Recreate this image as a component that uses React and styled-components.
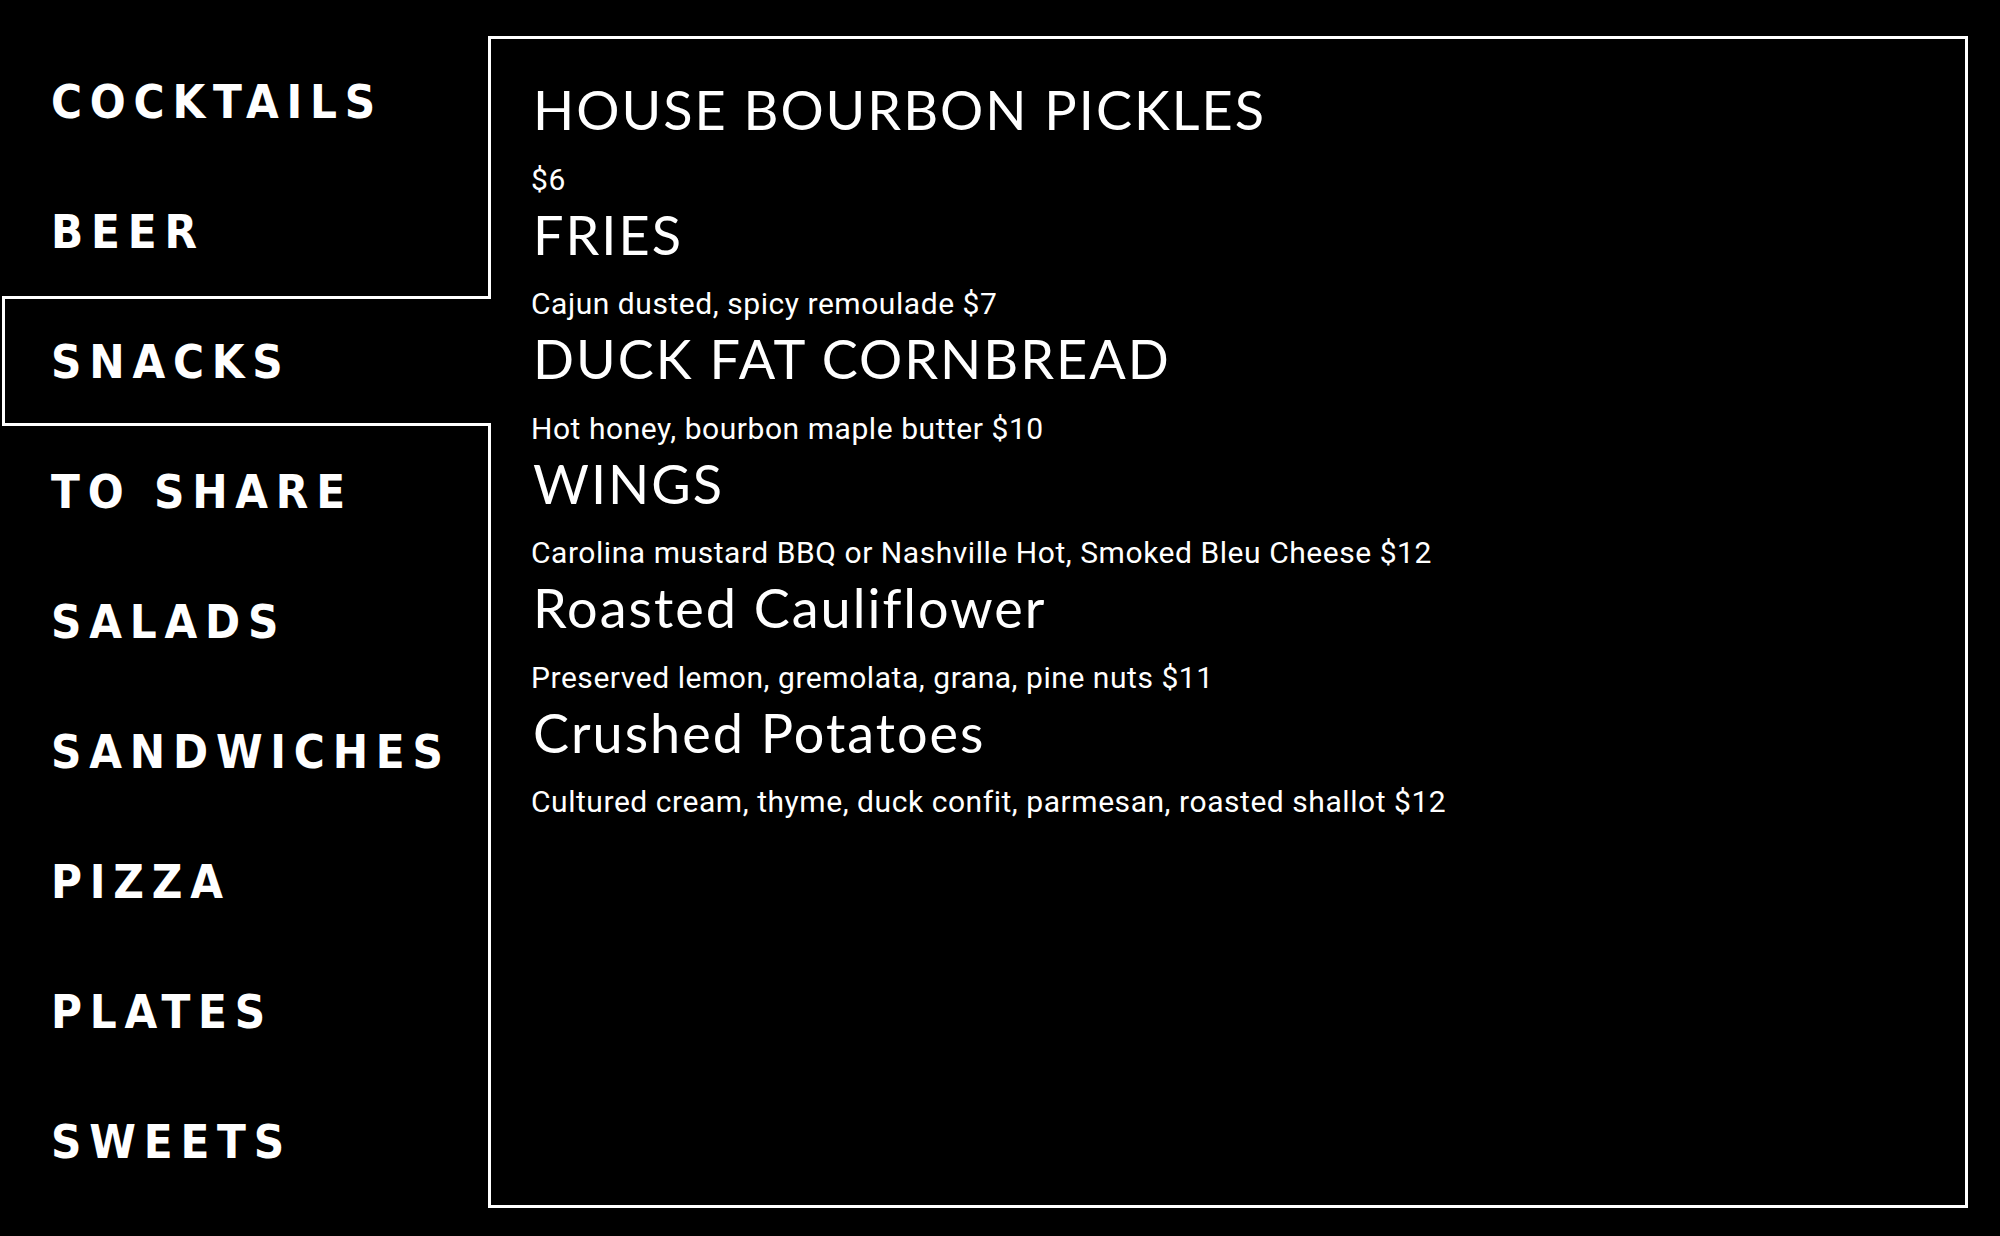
import React, { useState } from 'react';
import styled, { createGlobalStyle } from 'styled-components';

const GlobalStyle = createGlobalStyle`
  html, body {
    margin: 0;
    padding: 0;
    background: #000;
  }
  body {
    font-family: 'Lato', 'Open Sans', sans-serif;
    color: #fff;
  }
`;

const CATEGORIES = [
  'Cocktails',
  'Beer',
  'Snacks',
  'To Share',
  'Salads',
  'Sandwiches',
  'Pizza',
  'Plates',
  'Sweets',
];

const SNACKS = [
  { name: 'HOUSE BOURBON PICKLES', desc: '$6' },
  { name: 'FRIES', desc: 'Cajun dusted, spicy remoulade $7' },
  { name: 'DUCK FAT CORNBREAD', desc: 'Hot honey, bourbon maple butter $10' },
  {
    name: 'WINGS',
    desc: 'Carolina mustard BBQ or Nashville Hot, Smoked Bleu Cheese $12',
  },
  {
    name: 'Roasted Cauliflower',
    desc: 'Preserved lemon, gremolata, grana, pine nuts $11',
  },
  {
    name: 'Crushed Potatoes',
    desc: 'Cultured cream, thyme, duck confit, parmesan, roasted shallot $12',
  },
];

const Page = styled.div`
  display: flex;
  align-items: stretch;
  padding: 36px 32px 28px 0;
  min-height: 100vh;
  box-sizing: border-box;
  background: #000;
`;

const Nav = styled.nav`
  flex: 0 0 488px;
  width: 488px;
  min-width: 0;
  display: flex;
  flex-direction: column;
  padding-left: 2px;
  box-sizing: border-box;
`;

const NavItem = styled.button`
  position: relative;
  z-index: ${(props) => (props.active ? 1 : 0)};
  display: flex;
  align-items: center;
  height: 130px;
  margin-right: ${(props) => (props.active ? '-3px' : '0')};
  padding: 0 0 0 46px;
  box-sizing: border-box;
  background: #000;
  border: 3px solid ${(props) => (props.active ? '#fff' : 'transparent')};
  border-right: none;
  color: #fff;
  font-family: 'DejaVu Sans Condensed', 'DejaVu Sans', sans-serif;
  font-weight: 700;
  font-size: 47px;
  letter-spacing: 7.8px;
  text-transform: uppercase;
  text-align: left;
  cursor: pointer;
  white-space: pre;

  &:focus {
    outline: none;
  }
`;

const Panel = styled.section`
  flex: 1;
  min-width: 0;
  border: 3px solid #fff;
  padding: 39px 42px 0;
  box-sizing: border-box;
`;

const Item = styled.div`
  display: flex;
  flex-direction: column;
  height: 124.5px;
`;

const Dish = styled.h2`
  margin: 0 0 19px;
  font-family: 'Lato', 'Open Sans', sans-serif;
  font-weight: 400;
  font-size: 54px;
  line-height: 1.2;
  letter-spacing: 2px;
`;

const Desc = styled.p`
  margin: 0 0 0 -2px;
  font-family: 'Roboto', 'Liberation Sans', sans-serif;
  font-weight: 400;
  font-size: 30px;
  line-height: 1.2;
  letter-spacing: 0.55px;
`;

export default function App() {
  const [active, setActive] = useState('Snacks');

  return (
    <>
      <GlobalStyle />
      <Page>
        <Nav>
          {CATEGORIES.map((cat) => (
            <NavItem
              key={cat}
              active={cat === active}
              onClick={() => setActive(cat)}
            >
              {cat}
            </NavItem>
          ))}
        </Nav>
        <Panel>
          {SNACKS.map((item) => (
            <Item key={item.name}>
              <Dish>{item.name}</Dish>
              <Desc>{item.desc}</Desc>
            </Item>
          ))}
        </Panel>
      </Page>
    </>
  );
}
